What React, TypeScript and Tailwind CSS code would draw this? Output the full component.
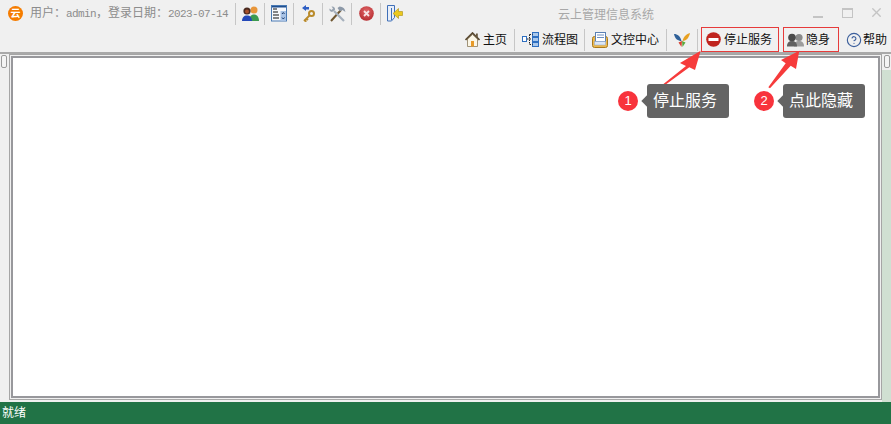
import React from "react";
import { CircleHelp, X } from "lucide-react";

const Sep = () => <div className="w-px h-[22px] shrink-0 bg-[#c6c6c6]" />;

const cjk = "font-['Liberation_Sans','Noto_Sans_CJK_SC',sans-serif]";
const latin = "font-['Liberation_Mono',monospace] text-[11px] tracking-[-0.6px]";

function UsersIcon() {
  return (
    <svg width="17" height="15" viewBox="0 0 17 15">
      <circle cx="12" cy="4" r="3.500" fill="#e8963a" />
      <path d="M7 15c0-4 2-6.500 5-6.500s5 2.500 5 6.500z" fill="#3c9a50" />
      <circle cx="5" cy="5" r="3.600" fill="#4a2a20" />
      <circle cx="5" cy="5.500" r="2" fill="#a8502a" />
      <path d="M0 15c0-3.500 2-5.500 5-5.500s5 2 5 5.500z" fill="#2448b8" />
    </svg>
  );
}

function ListIcon() {
  return (
    <svg width="16" height="17" viewBox="0 0 16 17">
      <rect x="0.500" y="0.500" width="15" height="15.500" fill="#f6f8fc" stroke="#4a7ab4" />
      <rect x="1" y="1" width="14" height="1.500" fill="#1f4f90" />
      <rect x="2" y="3.500" width="4" height="1" fill="#111" />
      <rect x="9.500" y="6" width="5.500" height="10" fill="#a9c3e6" />
      <path d="M2 7h5M2 10h6M2 13h6" stroke="#111" />
      <path d="M11 9l1.300-1.500L13.500 9M11 12.500l1.300 1.500 1.200-1.500" stroke="#1f3f70" fill="none" />
    </svg>
  );
}

function KeyIcon() {
  return (
    <svg width="13" height="17" viewBox="0 0 13 17">
      <path d="M0 3l4-3v2h3v2.500H4V6z" fill="#2f5fc4" />
      <circle cx="9.500" cy="8.500" r="2.500" fill="none" stroke="#b98a2a" strokeWidth="2" />
      <path d="M7.500 10.500L2 16M2.500 15.500l2 1M4.500 13.500l1.500 1.500" stroke="#b98a2a" strokeWidth="1.800" />
    </svg>
  );
}

function ToolsIcon() {
  return (
    <svg width="17" height="16" viewBox="0 0 17 16">
      <path d="M2 15L12 4" stroke="#6f5630" strokeWidth="2" />
      <path d="M15 15L5 5" stroke="#a6b0bc" strokeWidth="2.200" />
      <path d="M8.500 2l2-1.500c2 0 4 1 5 2.500l1 3-3-2-2.500 1.500z" fill="#8d99a8" />
      <path d="M0.500 2.500l2 1.500 1.500-1.500-1.500-2c2-.5 4 1 3.500 3.500L3 6C1 5.500 0 4.500 0.500 2.500z" fill="#98a3b0" />
    </svg>
  );
}

function ErrorIcon() {
  return (
    <svg width="15" height="15" viewBox="0 0 15 15">
      <defs>
        <radialGradient id="errorFill" cx="50%" cy="35%" r="70%">
          <stop offset="0%" stopColor="#e0686a" />
          <stop offset="100%" stopColor="#b4282c" />
        </radialGradient>
      </defs>
      <circle cx="7.500" cy="7.500" r="7.300" fill="url(#errorFill)" />
      <path d="M5 5l5 5M10 5l-5 5" stroke="#f8e4e4" strokeWidth="1.800" />
    </svg>
  );
}

function ExitIcon() {
  return (
    <svg width="16" height="17" viewBox="0 0 16 17">
      <path d="M0.500 0.500h7v12l-3 3.500h-4z" fill="#e8eef8" stroke="#3f6fb8" />
      <path d="M4.500 3v12" stroke="#3f6fb8" />
      <path d="M15.500 6.500h-4V3.500L6 8.500l5.500 5v-3h4z" fill="#ecc91e" stroke="#a98f12" strokeWidth="0.600" />
    </svg>
  );
}

function HomeIcon() {
  return (
    <svg width="15" height="15" viewBox="0 0 15 15">
      <path d="M2.500 7v7.500h10V7L7.500 2.500z" fill="#fbf6e6" stroke="#8a7a5a" strokeWidth="0.800" />
      <rect x="6" y="9" width="3" height="5.500" fill="#e89a28" />
      <path d="M0.500 8L7.500 1l7 7" fill="none" stroke="#5a4a32" strokeWidth="1.700" />
      <rect x="11" y="1.500" width="1.800" height="3.500" fill="#6a5a40" />
    </svg>
  );
}

function FlowIcon() {
  return (
    <svg width="17" height="15" viewBox="0 0 17 15">
      <rect x="0.500" y="4.500" width="4" height="5" fill="#fff" stroke="#2f6fc0" />
      <rect x="10.500" y="0.500" width="6" height="4" fill="#a9c8ec" stroke="#2f6fc0" />
      <rect x="10.500" y="5.500" width="6" height="4" fill="#a9c8ec" stroke="#2f6fc0" />
      <rect x="10.500" y="10.500" width="6" height="4" fill="#a9c8ec" stroke="#2f6fc0" />
      <path d="M5 7h4M7.500 2.500V12.500M7.500 2.500h3M7.500 12.500h3" stroke="#222" strokeDasharray="1.500 1" />
    </svg>
  );
}

function ConsoleIcon() {
  return (
    <svg width="16" height="16" viewBox="0 0 16 16">
      <rect x="0.500" y="4.500" width="15" height="11" rx="2" fill="#ecb84e" stroke="#a97a1e" />
      <rect x="3.500" y="0.500" width="10" height="9" fill="#fff" stroke="#5a80b4" />
      <path d="M5 3h7M5 5.500h7" stroke="#6e8fc0" />
      <rect x="2.500" y="9.500" width="11" height="3.500" fill="#dbe6f5" stroke="#8fa6c8" strokeWidth="0.500" />
    </svg>
  );
}

function ButterflyIcon() {
  return (
    <svg width="16" height="14" viewBox="0 0 16 14">
      <path d="M0 1c3.500 0 6.500 2.500 7.500 7-3.500 0-6.500-2-7.500-7z" fill="#2f6098" />
      <path d="M16 0c-3.500 1-6.500 3.500-7.500 8 3.500 0 6.500-3 7.500-8z" fill="#e8a020" />
      <path d="M8 8L4.500 9.500 7.500 14z" fill="#d9402f" />
      <path d="M8 8l3.500 1.500L8.500 14z" fill="#5aa83c" />
    </svg>
  );
}

function StopIcon() {
  return (
    <svg width="15" height="15" viewBox="0 0 15 15">
      <circle cx="7.500" cy="7.500" r="7.300" fill="#c0241e" />
      <rect x="2.500" y="6" width="10" height="3" fill="#fff" />
    </svg>
  );
}

function HideIcon() {
  return (
    <svg width="17" height="14" viewBox="0 0 17 14">
      <circle cx="12" cy="4.500" r="3.600" fill="#8a8a8a" />
      <path d="M7 13.500c0-4 2-5.500 5-5.500s5 1.500 5 5.500z" fill="#9c9c9c" />
      <circle cx="5" cy="4.500" r="3.800" fill="#4a4a4a" />
      <path d="M0 13.500c0-4 2-5.500 5-5.500s5 1.500 5 5.500z" fill="#606060" />
    </svg>
  );
}

function Callout({ n, text, className }: { n: number; text: string; className: string }) {
  return (
    <div className={`absolute flex items-center ${className}`}>
      <div className="w-5 h-5 rounded-full bg-[#f8333c] text-white text-[13px] flex items-center justify-center">{n}</div>
      <div className="ml-[9px] relative w-[82px] h-[34px] pl-[6px] rounded-[3px] bg-[#646464] text-white text-[16px] flex items-center">
        <span className="absolute -left-1 top-[13px] w-2 h-2 rotate-45 bg-[#646464]" />
        <span className="relative">{text}</span>
      </div>
    </div>
  );
}

export default function App() {
  return (
    <div className={`relative w-[891px] h-[424px] overflow-hidden bg-[#f0f0f0] flex flex-col ${cjk}`}>
      {/* Title and tool rows */}
      <div className="h-[52px] flex flex-col shrink-0">
        <div className="h-[27px] flex items-center relative">
          <div className="ml-2 w-[15px] h-[15px] rounded-full bg-[#f57c00] text-white text-[10px] font-bold leading-none flex items-center justify-center">
            云
          </div>
          <div className="ml-[7px] w-[205px] text-[12px] text-[#8c8c8c] whitespace-nowrap">
            用户：<span className={latin}>admin</span>，登录日期：<span className={latin}>2023-07-14</span>
          </div>
          <Sep />
          <div className="w-[28px] flex justify-center"><UsersIcon /></div>
          <Sep />
          <div className="w-[28px] flex justify-center"><ListIcon /></div>
          <Sep />
          <div className="w-[28px] flex justify-center"><KeyIcon /></div>
          <Sep />
          <div className="w-[28px] flex justify-center"><ToolsIcon /></div>
          <Sep />
          <div className="w-[28px] flex justify-center"><ErrorIcon /></div>
          <Sep />
          <div className="w-[28px] flex justify-center"><ExitIcon /></div>
          <div className="absolute left-[558px] top-[8px] text-[12px] leading-[15px] text-[#a8a8a8]">云上管理信息系统</div>
          {/* Window buttons */}
          <div className="absolute left-[813px] top-[8px] h-[10px] w-[10px] flex items-end">
            <div className="w-[10px] h-[2px] bg-[#c4c4c4]" />
          </div>
          <div className="absolute left-[842px] top-[8px] w-[11px] h-[10px] border border-t-[2px] border-[#c4c4c4]" />
          <X size={15} strokeWidth={2.200} className="absolute left-[869px] top-[5px] text-[#c4c4c4]" />
        </div>
        <div className="h-[25px] flex items-center text-[12px] text-[#111] whitespace-nowrap pl-[465px]">
          <div className="flex items-center gap-[3px] w-[49px] shrink-0"><HomeIcon />主页</div>
          <Sep />
          <div className="flex items-center gap-[3px] w-[69px] pl-[7px] shrink-0"><FlowIcon />流程图</div>
          <Sep />
          <div className="flex items-center gap-[3px] w-[81px] pl-[7px] shrink-0"><ConsoleIcon />文控中心</div>
          <Sep />
          <div className="w-[30px] pl-[7px] shrink-0"><ButterflyIcon /></div>
          <Sep />
          <div className="ml-[3px] h-[25px] w-[78px] shrink-0 border border-[#e63b3b] flex items-center pl-[4px] gap-[3px]"><StopIcon />停止服务</div>
          <div className="ml-[4px] h-[25px] w-[56px] shrink-0 border border-[#e63b3b] flex items-center pl-[3px] gap-[2px]"><HideIcon />隐身</div>
          <div className="ml-[7px] flex items-center gap-[1px]">
            <CircleHelp size={16} strokeWidth={1.700} className="text-[#3c5f9c]" />帮助
          </div>
        </div>
      </div>

      {/* Main area */}
      <div className="flex-1 flex min-h-0 border-t-2 border-t-[#a9a9a9]">
        <div className="w-[9px] shrink-0 pl-px pt-px">
          <div className="w-[6px] h-[13px] border border-[#9a9a9a] rounded-[2px] bg-[#f4f4f4]" />
        </div>
        <div className="w-[873px] shrink-0 pb-[2px]">
          <div className="w-full h-full border border-[#a6a6a6] bg-[#f0f0f0] p-px">
            <div className="w-full h-full bg-white border-2 border-[#98989c]" />
          </div>
        </div>
        <div className="w-[9px] shrink-0 flex flex-col">
          <div className="h-[13px] w-[6px] mt-px ml-[2px] border border-[#9a9a9a] rounded-[2px] bg-[#f4f4f4]" />
          <div className="flex-1 mt-[2px] bg-[#d0e0d2]" />
        </div>
      </div>

      {/* Status bar */}
      <div className="h-[22px] shrink-0 bg-[#217346] text-white text-[12px] flex items-center pl-[2px]">就绪</div>

      {/* Annotation arrows */}
      <svg width="891" height="424" viewBox="0 0 891 424" className="absolute left-0 top-0 pointer-events-none">
        <path d="M660 86.700L686 66 680 63 700.700 50.700 695 70 689.300 67.300 662.700 86.700z" fill="#f63b3b" />
        <path d="M768.300 87.300L785.700 63.300 781 60 799.300 50.700 796 69 790.700 65.700 770 88.300z" fill="#f63b3b" />
      </svg>
      <Callout n={1} text="停止服务" className="left-[618px] top-[84px]" />
      <Callout n={2} text="点此隐藏" className="left-[754px] top-[84px]" />
    </div>
  );
}
